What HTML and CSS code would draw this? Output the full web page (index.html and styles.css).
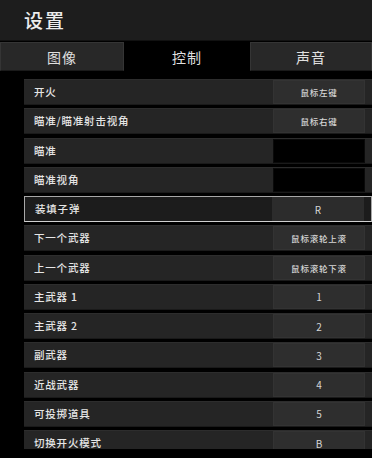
FILE: index.html
```html
<!DOCTYPE html>
<html lang="zh">
<head>
<meta charset="utf-8">
<title>设置</title>
<link rel="stylesheet" href="styles.css">
</head>
<body>
<div class="app">
  <header class="header"><h1 class="title">设置</h1></header>
  <nav class="tabs">
    <div class="tab">图像</div>
    <div class="tab active">控制</div>
    <div class="tab">声音</div>
  </nav>
  <div class="list">
    <div class="row"><span class="label">开火</span><span class="key small">鼠标左键</span></div>
    <div class="row"><span class="label">瞄准/瞄准射击视角</span><span class="key small">鼠标右键</span></div>
    <div class="row"><span class="label">瞄准</span><span class="key empty"></span></div>
    <div class="row"><span class="label">瞄准视角</span><span class="key empty"></span></div>
    <div class="row selected"><span class="label">装填子弹</span><span class="key">R</span></div>
    <div class="row"><span class="label">下一个武器</span><span class="key small">鼠标滚轮上滚</span></div>
    <div class="row"><span class="label">上一个武器</span><span class="key small">鼠标滚轮下滚</span></div>
    <div class="row"><span class="label">主武器 1</span><span class="key">1</span></div>
    <div class="row"><span class="label">主武器 2</span><span class="key">2</span></div>
    <div class="row"><span class="label">副武器</span><span class="key">3</span></div>
    <div class="row"><span class="label">近战武器</span><span class="key">4</span></div>
    <div class="row"><span class="label">可投掷道具</span><span class="key">5</span></div>
    <div class="row"><span class="label">切换开火模式</span><span class="key">B</span></div>
  </div>
</div>
</body>
</html>
```
FILE: styles.css
```css
* { box-sizing: border-box; }
html, body {
  margin: 0;
  padding: 0;
  background: #000;
}
body {
  width: 372px;
  height: 458px;
  overflow: hidden;
  font-family: "Noto Sans CJK SC", "Noto Sans", "Liberation Sans", sans-serif;
  color: #e2e2e2;
}
.header {
  height: 41px;
  background: #1d1d1d;
  padding-left: 24px;
  display: flex;
  align-items: center;
  border-bottom: 1px solid #111;
}
.title {
  margin: 0;
  font-size: 19px;
  font-weight: 500;
  letter-spacing: 2px;
  color: #ececec;
  line-height: 1;
  padding-bottom: 2px;
}
.tabs {
  margin-top: 1px;
  display: grid;
  grid-template-columns: 124px 126px 122px;
  height: 29px;
}
.tab {
  display: flex;
  align-items: center;
  justify-content: center;
  font-size: 14px;
  letter-spacing: 1px;
  background: #282828;
  border: 1px solid #353535;
  border-bottom-color: #1a1a1a;
  color: #e0e0e0;
}
.tab.active {
  background: #000;
  border-color: #000;
}
.list {
  margin-top: 8px;
  margin-left: 24px;
  height: 370px;
  overflow: hidden;
  display: flex;
  flex-direction: column;
  gap: 3.25px;
}
.row {
  flex: none;
  height: 26px;
  display: flex;
  align-items: center;
  background: #252525;
  border-top: 1px solid #2d2d2d;
  border-bottom: 1px solid #1a1a1a;
  padding-right: 7px;
}
.label {
  flex: 1;
  padding-left: 10px;
  padding-bottom: 1px;
  font-size: 10.5px;
  font-weight: 500;
  letter-spacing: 0.8px;
  color: #e6e6e6;
}
.key {
  width: 92px;
  height: 24px;
  display: flex;
  align-items: center;
  justify-content: center;
  background: #2e2e2e;
  border: 1px solid #333;
  font-size: 10px;
  color: #d6d6d6;
}
.key.small {
  font-size: 8.5px;
  font-weight: 500;
  letter-spacing: 0.8px;
}
.key.empty {
  background: #000;
  border-color: #0a0a0a;
}
.row.selected {
  background: #1c1c1c;
  border: 1px solid #a8a8a8;
  border-bottom-color: #d0d0d0;
}
.row.selected .key {
  background: #2c2c2c;
  border-color: #2c2c2c;
}
```
